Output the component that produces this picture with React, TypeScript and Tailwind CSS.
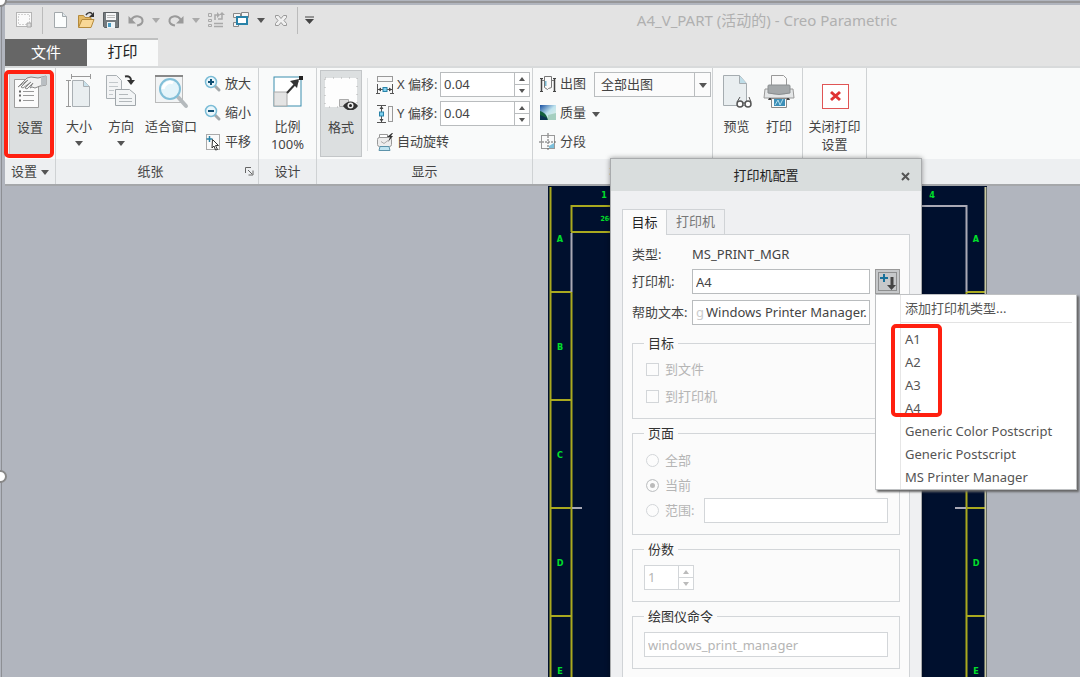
import type { ReactNode } from 'react';

const PRINTERS = [
  'A1',
  'A2',
  'A3',
  'A4',
  'Generic Color Postscript',
  'Generic Postscript',
  'MS Printer Manager',
];

const LEFT_ZONES = [
  { name: 'A', y: 55 },
  { name: 'B', y: 163 },
  { name: 'C', y: 271 },
  { name: 'D', y: 379 },
  { name: 'E', y: 487 },
];

// the open menu lies over B and C on this side
const RIGHT_ZONES = LEFT_ZONES.filter(({ name }) => name !== 'B' && name !== 'C');

interface ChildrenProps {
  children?: ReactNode;
}

/* ---------- small icons ---------- */

const Caret = ({ className = 'text-[#555]' }: { className?: string }) => (
  <svg width="8" height="6" viewBox="0 0 8 6" className={className}>
    <path d="M0 1h8L4 6z" fill="currentColor" />
  </svg>
);

const SelectIcon = () => (
  <svg width="18" height="18" viewBox="0 0 18 18">
    <rect x="1.500" y="1.500" width="15" height="14" fill="#fafafa" stroke="#b5b5b5" />
    <rect x="3.500" y="3.500" width="11" height="10" fill="none" stroke="#aaa" strokeDasharray="1 2" />
    <path d="M12 12h4v4h-4z" fill="#ddd" stroke="#aaa" />
  </svg>
);

const NewIcon = () => (
  <svg width="18" height="18" viewBox="0 0 18 18">
    <path d="M2.500 1.500h8l4 4v11h-12z" fill="#fbfdfd" stroke="#a3a9ac" />
    <path d="M10.500 1.500v4h4" fill="#dfe8ec" stroke="#a3a9ac" />
  </svg>
);

const OpenIcon = () => (
  <svg width="18" height="18" viewBox="0 0 18 18">
    <path d="M1.500 16V4.500h5l1.500 2h6V9" fill="#e3b964" stroke="#b58a3b" />
    <path d="M1.500 16.500L5 8.500h12l-3 8z" fill="#f9d896" stroke="#b58a3b" />
    <path d="M9 4c2-3 5-3 6-1" fill="none" stroke="#333" strokeWidth="1.500" />
    <path d="M17 1v5h-5z" fill="#333" />
  </svg>
);

const SaveIcon = () => (
  <svg width="18" height="18" viewBox="0 0 18 18">
    <path d="M1.500 1.500h15v15h-14l-1-1z" fill="#747a7e" stroke="#5a5f62" />
    <rect x="4" y="2" width="10" height="7" fill="#f5f6f7" />
    <path d="M5 4.500h8M5 6.500h8" stroke="#bbb" />
    <rect x="5" y="11" width="8" height="6" fill="#eef4f7" />
    <rect x="6" y="12" width="3" height="4" fill="#4a9ac0" />
  </svg>
);

const UndoIcon = ({ flip }: { flip?: boolean }) => (
  <svg width="18" height="18" viewBox="0 0 18 18" className={flip ? '-scale-x-100' : ''}>
    <path d="M4 9c4-6 12-4 11.500 1.500C15 13 13 14 10 14.500" fill="none" stroke="#9a9a9a" strokeWidth="2" />
    <path d="M1.500 5v7.500H9z" fill="#9a9a9a" />
  </svg>
);

const RegenIcon = () => (
  <svg width="18" height="18" viewBox="0 0 18 18" fill="none" stroke="#a9a9a9">
    <path d="M1.500 2.500h3v3h-3zM1.500 8.500h3v2h-3zM1.500 13.500h3v2h-3z" />
    <path d="M7 12.500h9M7 15.500h9" strokeWidth="1.500" />
    <path d="M8 9V4h3M15 3v5h-4" strokeWidth="1.500" />
    <path d="M10 1l3 3-3 3zM12 4l3-3 3 3z" fill="#a9a9a9" stroke="none" />
  </svg>
);

const WindowsIcon = () => (
  <svg width="18" height="18" viewBox="0 0 18 18">
    <path d="M1.500 2.500h7v4h-7zM1.500 11.500h5v4h-5z" fill="#f4f4f4" stroke="#888" />
    <path d="M9.500 1.500h7v5h-7z" fill="#f4f4f4" stroke="#888" />
    <rect x="5" y="6" width="10" height="7" fill="#fff" stroke="#2882a8" strokeWidth="2" />
  </svg>
);

const CloseWinIcon = () => (
  <svg width="18" height="18" viewBox="0 0 18 18">
    <path
      d="M3.500 4.500h3l2.500 3 2.500-3h3v2l-2.500 3 2.500 3v2h-3l-2.500-3-2.500 3h-3v-2l2.500-3-2.500-3z"
      fill="#f0f0f0"
      stroke="#999"
    />
  </svg>
);

const ZoomIcon = ({ minus }: { minus?: boolean }) => (
  <svg width="18" height="18" viewBox="0 0 18 18">
    <path d="M11 11l4 4" stroke="#a3a9ac" strokeWidth="3" strokeLinecap="round" />
    <circle cx="7" cy="7" r="5.500" fill="#eaf6fb" stroke="#7bbcd6" strokeWidth="1.500" />
    <path d={minus ? 'M4 7h6' : 'M4 7h6M7 4v6'} stroke="#0f4f74" strokeWidth="2" />
  </svg>
);

const PanIcon = () => (
  <svg width="18" height="18" viewBox="0 0 18 18">
    <rect x="2.500" y="1.500" width="13" height="15" fill="#fafafa" stroke="#aaa" />
    <path d="M5.500 3v6M2.500 6h6" stroke="#2882a8" strokeWidth="1.500" />
    <path d="M8.500 6.500l6 6h-3l2 4-2 .5-1.500-4-2 2z" fill="#fff" stroke="#333" />
  </svg>
);

const OffsetXIcon = () => (
  <svg width="18" height="20" viewBox="0 0 18 20">
    <rect x="1.500" y="1.500" width="15" height="5" fill="#f8f8f8" stroke="#999" />
    <path d="M1.500 9v9M16.500 9v9M0 18.500h4M14 18.500h4M2 14.500h14" stroke="#555" fill="none" />
    <path d="M2 14.500l3-2v4zM16 14.500l-3-2v4z" fill="#444" />
    <rect x="7" y="12.500" width="4" height="4" fill="#7fd0ee" stroke="#2882a8" />
  </svg>
);

const OffsetYIcon = () => (
  <svg width="18" height="20" viewBox="0 0 18 20">
    <rect x="12.500" y="2.500" width="4" height="15" fill="#f8f8f8" stroke="#999" />
    <path d="M1 1.500h9M1 18.500h9M5.500 2v16" stroke="#555" fill="none" />
    <path d="M5.500 2l-2 3h4zM5.500 18l-2-3h4z" fill="#444" />
    <rect x="3.500" y="8" width="4" height="4" fill="#7fd0ee" stroke="#2882a8" />
  </svg>
);

const AutoRotateIcon = () => (
  <svg width="18" height="20" viewBox="0 0 18 20">
    <path d="M3.500 6V2.500h8V6" fill="#fff" stroke="#999" />
    <rect x="1.500" y="5.500" width="14" height="9" rx="2" fill="#ededed" stroke="#999" />
    <path d="M5 9.500l3 2 4-3" fill="none" stroke="#aaa" />
    <path d="M4 14.500h9l1 4H3z" fill="#bfe4f1" stroke="#5d93aa" />
    <path d="M16 1l-5 4h3l-2 5 5-6h-2l2-3z" fill="#333" />
  </svg>
);

const PlotIcon = () => (
  <svg width="18" height="18" viewBox="0 0 18 18">
    <path d="M2.500 3v13M15.500 3v13" stroke="#444" strokeWidth="1.500" />
    <path d="M1 3.500h3M14 3.500h3M1 16.500h3M14 16.500h3" stroke="#444" />
    <path d="M5.500 1.500h7v11l-3 1-1 1-3-2z" fill="#fafafa" stroke="#777" />
    <path d="M6 6h1.500v5H6" fill="#79b9d3" />
    <path d="M3 5.500h3M12 5.500h3" stroke="#777" />
  </svg>
);

const QualityIcon = () => (
  <svg width="18" height="16" viewBox="0 0 18 16">
    <defs>
      <linearGradient id="sky" x1="0" y1="0" x2="1" y2="1">
        <stop offset="0" stopColor="#164ea0" />
        <stop offset="0.500" stopColor="#bfe3ee" />
        <stop offset="1" stopColor="#e9f3e4" />
      </linearGradient>
    </defs>
    <rect x="1" width="16" height="15" fill="url(#sky)" />
    <path d="M1 6c4 1 7 4 8 9H1z" fill="#14603f" />
    <path d="M1 10l7 3v2H1z" fill="#0c3554" />
    <path d="M9 10l8-2v7H9z" fill="#a5cfc0" />
  </svg>
);

const SegmentIcon = () => (
  <svg width="18" height="18" viewBox="0 0 18 18">
    <rect x="2.500" y="2.500" width="13" height="13" fill="#fafafa" stroke="#999" />
    <path d="M9 0v18M0 9h18" stroke="#666" strokeDasharray="2 1" />
    <path d="M10 13l5-3v5h-5z" fill="#7cc0dc" />
  </svg>
);

/* ---------- large ribbon icons ---------- */

const SetupIcon = () => (
  <svg width="36" height="36" viewBox="0 0 36 36">
    <path d="M2.500 5.500h24v28h-24z" fill="#fbfbfb" stroke="#9d9d9d" />
    <path d="M7 17.500h2M7 21.500h2M7 26.500h2" stroke="#666" strokeWidth="2" />
    <path d="M11 17.500h11M11 21.500h11M11 26.500h11" stroke="#999" />
    <path
      d="M6 13L15 4l4-1 7 1 8-2v9l-6 1-5 2-3-1-2 1 3-5-6 6-2-1 6-6-8 6-2-1 7-7z"
      fill="#f1f1f1"
      stroke="#888"
      strokeLinejoin="round"
    />
    <path d="M29 3l5-1v9l-5 1z" fill="#b9bec2" />
  </svg>
);

const SizeIcon = () => (
  <svg width="36" height="36" viewBox="0 0 36 36">
    <path d="M11 3.500h18M10.500 1v5M29.500 1v5M7.500 7v26M5 7.500h5M5 33.500h5" stroke="#999" fill="none" />
    <path d="M11.500 7.500h11l6 6v20h-17z" fill="#e9eef0" stroke="#a9afb3" />
    <path d="M22.500 7.500v6h6" fill="#c9e2ec" stroke="#a9afb3" />
  </svg>
);

const OrientIcon = () => (
  <svg width="36" height="36" viewBox="0 0 36 36">
    <path d="M3.500 2.500h10l5 5v18h-15z" fill="#f3f4f5" stroke="#a9afb3" />
    <path d="M6 9.500h9M6 13.500h9M6 17.500h5M6 21.500h4" stroke="#c3c8cb" />
    <path d="M12.500 16.500h14l6 5v11h-20z" fill="#f3f5f6" stroke="#a0a6aa" />
    <path d="M16 21.500h9M16 25.500h13M16 28.500h13" stroke="#b3b8bb" />
    <path d="M22 3.500c4-1 6 1 6 4" fill="none" stroke="#333" strokeWidth="2" />
    <path d="M24 7h8l-4 5z" fill="#333" />
  </svg>
);

const FitIcon = () => (
  <svg width="36" height="36" viewBox="0 0 36 36">
    <rect x="2.500" y="3.500" width="27" height="26" fill="#f2f4f5" stroke="#bbb" />
    <path d="M2 3h28" stroke="#888" strokeWidth="2" />
    <path d="M25 24l8 9" stroke="#b5babd" strokeWidth="4" strokeLinecap="round" />
    <circle cx="17" cy="16" r="10" fill="#e4f4fa" stroke="#82bfd8" strokeWidth="2" />
    <path d="M10 16c1-5 6-8 10-6" stroke="#fff" strokeWidth="3" fill="none" />
  </svg>
);

const ScaleIcon = () => (
  <svg width="32" height="36" viewBox="0 0 32 36">
    <rect x="2" y="4" width="27" height="29" fill="#fff" stroke="#3b8dad" />
    <rect x="2" y="19" width="13" height="14" fill="#e4e4e4" stroke="#aaa" />
    <path d="M15 20L26 8" stroke="#333" strokeWidth="2" />
    <path d="M18 8l9-2-2 9z" fill="#333" />
    <path d="M27 3h4v4h-4z" fill="#222" />
  </svg>
);

const FormatIcon = () => (
  <svg width="36" height="36" viewBox="0 0 36 36">
    <rect x="2" y="4" width="32" height="29" fill="#fdfdfd" stroke="#b0b0b0" strokeDasharray="1 7" />
    <path d="M16.500 25.500h9v7h-9z" fill="#ddd" stroke="#aaa" />
    <path d="M20 32c4-6 11-6 15 0-4 6-11 6-15 0z" fill="#333" />
    <circle cx="27.500" cy="31.500" r="3" fill="#eee" />
    <circle cx="27.500" cy="31.500" r="1.500" fill="#222" />
  </svg>
);

const PreviewIcon = () => (
  <svg width="36" height="36" viewBox="0 0 36 36">
    <path d="M4.500 2.500h16l7 8v22h-23z" fill="#e9eef0" stroke="#a5acb0" />
    <path d="M20.500 2.500v8h7" fill="#bfdde8" stroke="#a5acb0" />
    <circle cx="21" cy="31" r="3" fill="#fff" stroke="#555" strokeWidth="1.500" />
    <circle cx="29" cy="31" r="3" fill="#fff" stroke="#555" strokeWidth="1.500" />
    <path d="M18 29l3-5M32 29l-2-5M24 30h2" stroke="#555" />
  </svg>
);

const PrintIcon = () => (
  <svg width="36" height="36" viewBox="0 0 36 36">
    <path d="M10.500 2.500h12l3 3v9h-15z" fill="#f9f9f9" stroke="#999" />
    <path d="M4 16h28l1 9H3z" fill="#e4e6e7" stroke="#999" />
    <path d="M7 13q0-1 1-1h20q1 0 1 1v7q-11 3-22 0z" fill="#a4a8aa" stroke="#8a8e90" />
    <path d="M8 25h20l1 2H7z" fill="#444" />
    <path d="M10.500 25.500h15v9h-15z" fill="#fafafa" stroke="#888" />
    <path d="M13 26h11v7H13z" fill="#3c8fb8" />
    <path d="M14 32l3-5 2 5 3-6" stroke="#b5deec" fill="none" />
  </svg>
);

const ClosePrintIcon = () => (
  <svg width="36" height="36" viewBox="0 0 36 36">
    <rect x="5.500" y="11.500" width="26" height="24" fill="#fff" stroke="#e05555" />
    <path d="M14 19l9 8M23 19l-9 8" stroke="#e03333" strokeWidth="3" />
  </svg>
);

/* ---------- ribbon pieces ---------- */

interface GroupProps extends ChildrenProps {
  width: string;
  label?: ReactNode;
}

const Group = ({ width, label, children }: GroupProps) => (
  <section className={`${width} shrink-0 flex flex-col border-r border-[#cfd2d4]`}>
    <div className="flex h-[91px] pt-[2px]">{children}</div>
    <div className="flex h-[25px] items-center justify-center gap-1 bg-[#edeff1]">{label}</div>
  </section>
);

interface BigButtonProps extends ChildrenProps {
  width: string;
  icon: ReactNode;
  arrow?: boolean;
  active?: boolean;
}

const BigButton = ({ width, icon, arrow, active, children }: BigButtonProps) => (
  <button
    className={`${width} h-[87px] shrink-0 flex flex-col items-center pt-[3px] leading-[18px] ${
      active ? 'bg-[#dcdfe0] border border-[#c3c6c8]' : ''
    }`}
  >
    {icon}
    <span className="mt-2 whitespace-nowrap">{children}</span>
    {arrow && <Caret className="mt-[5px] shrink-0 text-[#555]" />}
  </button>
);

const SmallButton = ({ icon, children }: ChildrenProps & { icon: ReactNode }) => (
  <button className="flex h-[29px] items-center gap-[3px] whitespace-nowrap pb-px">
    {icon}
    {children}
  </button>
);

const SpinButtons = ({ width, color }: { width: string; color: string }) => (
  <span className={`${width} ${color} flex flex-col border-l border-inherit`}>
    <button aria-label="增加" className="flex flex-1 items-center justify-center border-b border-inherit">
      <svg width="6" height="4" viewBox="0 0 6 4">
        <path d="M0 4h6L3 0z" fill="currentColor" />
      </svg>
    </button>
    <button aria-label="减少" className="flex flex-1 items-center justify-center">
      <svg width="6" height="4" viewBox="0 0 6 4">
        <path d="M0 0h6L3 4z" fill="currentColor" />
      </svg>
    </button>
  </span>
);

const OffsetField = ({ icon, label }: { icon: ReactNode; label: string }) => (
  <label className="flex h-[29px] items-center gap-[3px] whitespace-nowrap">
    {icon}
    <span className="w-[40px]">{label}</span>
    <span className="flex h-[25px] border border-[#b9bcbe] bg-white">
      <input defaultValue="0.04" className="w-[73px] pl-[3px] outline-none" />
      <SpinButtons width="w-[15px]" color="text-[#555]" />
    </span>
  </label>
);

const QuickBar = () => (
  <div className="flex h-[34px] items-center pb-1">
    <div className="flex items-center gap-[7px] pl-[10px]">
      <button aria-label="选择"><SelectIcon /></button>
      <span className="mx-[2px] h-[27px] w-px bg-[#bbb]" />
      <button aria-label="新建"><NewIcon /></button>
      <button aria-label="打开"><OpenIcon /></button>
      <button aria-label="保存"><SaveIcon /></button>
      <button aria-label="撤消"><UndoIcon /></button>
      <button aria-label="撤消列表"><Caret className="text-[#aaa]" /></button>
      <button aria-label="重做"><UndoIcon flip /></button>
      <button aria-label="重做列表"><Caret className="text-[#aaa]" /></button>
      <button aria-label="重新生成"><RegenIcon /></button>
      <button aria-label="窗口"><WindowsIcon /></button>
      <button aria-label="窗口列表"><Caret /></button>
      <button aria-label="关闭窗口"><CloseWinIcon /></button>
      <span className="h-[27px] w-px bg-[#bbb]" />
      <button aria-label="自定义">
        <svg width="9" height="9" viewBox="0 0 9 9">
          <path d="M0 1h9" stroke="#444" />
          <path d="M0 3h9L4.500 8z" fill="#444" />
        </svg>
      </button>
    </div>
    <h1 className="flex-1 pl-[140px] text-center text-[15px] text-[#b0b0b0]">
      A4_V_PART (活动的) - Creo Parametric
    </h1>
  </div>
);

const Ribbon = () => (
  <div className="flex h-[120px] border-t-2 border-b-2 border-t-[#d8dadb] border-b-[#a5a7aa] bg-[#f9fafa] text-[13px] text-[#444]">
    <Group
      width="w-[51px]"
      label={
        <>
          设置 <Caret />
        </>
      }
    >
      <div className="ml-1">
        <BigButton width="w-[42px]" icon={<SetupIcon />} active>
          设置
        </BigButton>
      </div>
    </Group>
    <Group
      width="w-[203px]"
      label={
        <>
          <span className="flex-1 pl-1 text-center">纸张</span>
          <button aria-label="纸张选项" className="pr-1">
            <svg width="9" height="9" viewBox="0 0 9 9" fill="none" stroke="#666">
              <path d="M.5 6V.5H6M3 3l4 4M8 3.500V8H3.500" />
            </svg>
          </button>
        </>
      }
    >
      <BigButton width="w-[46px]" icon={<SizeIcon />} arrow>大小</BigButton>
      <BigButton width="w-[38px]" icon={<OrientIcon />} arrow>方向</BigButton>
      <BigButton width="w-[62px]" icon={<FitIcon />}>适合窗口</BigButton>
      <div className="ml-[2px]">
        <SmallButton icon={<ZoomIcon />}>放大</SmallButton>
        <SmallButton icon={<ZoomIcon minus />}>缩小</SmallButton>
        <SmallButton icon={<PanIcon />}>平移</SmallButton>
      </div>
    </Group>
    <Group width="w-[58px]" label="设计">
      <BigButton width="w-[57px]" icon={<ScaleIcon />}>
        比例
        <br />
        100%
      </BigButton>
    </Group>
    <Group width="w-[216px]" label="显示">
      <div className="ml-[3px]">
        <BigButton width="w-[42px]" icon={<FormatIcon />} active>
          格式
        </BigButton>
      </div>
      <span className="mx-[5px] my-2 w-px bg-[#dcdfe0]" />
      <div className="ml-[3px]">
        <OffsetField icon={<OffsetXIcon />} label="X 偏移:" />
        <OffsetField icon={<OffsetYIcon />} label="Y 偏移:" />
        <SmallButton icon={<AutoRotateIcon />}>自动旋转</SmallButton>
      </div>
    </Group>
    <Group width="w-[180px]" label="模型">
      <div className="ml-[6px]">
        <div className="flex items-center gap-2">
          <SmallButton icon={<PlotIcon />}>出图</SmallButton>
          <span className="relative">
            <select
              aria-label="出图范围"
              className="block h-[25px] w-[117px] appearance-none border border-[#b9bcbe] bg-[#fbfbfb] pl-[6px] outline-none"
            >
              <option>全部出图</option>
            </select>
            <span className="pointer-events-none absolute inset-y-0 right-0 flex w-[17px] items-center justify-center border-l border-[#b9bcbe]">
              <Caret />
            </span>
          </span>
        </div>
        <div className="flex items-center gap-[6px]">
          <SmallButton icon={<QualityIcon />}>质量</SmallButton>
          <Caret />
        </div>
        <SmallButton icon={<SegmentIcon />}>分段</SmallButton>
      </div>
    </Group>
    <Group width="w-[90px]">
      <BigButton width="w-[47px]" icon={<PreviewIcon />}>预览</BigButton>
      <BigButton width="w-[38px]" icon={<PrintIcon />}>打印</BigButton>
    </Group>
    <Group width="w-[64px]">
      <BigButton width="w-[63px]" icon={<ClosePrintIcon />}>
        关闭打印
        <br />
        设置
      </BigButton>
    </Group>
    <div className="flex flex-1 flex-col justify-end">
      <div className="h-[25px] bg-[#edeff1]" />
    </div>
  </div>
);

/* ---------- drawing sheet ---------- */

const Sheet = () => (
  <svg width="439" height="492" viewBox="0 -1 439 492" className="ml-[543px] block bg-[#00102e]">
    <g stroke="#a9a91f" strokeWidth="2" fill="none">
      <path d="M2.500 0v491M23.500 18v27M23.500 105v386M23 19h80M23 45h80" />
      <path d="M2 105h21M2 213h21M2 321h21M2 429h21" />
      <path d="M418.500 105v386M418 105h20M418 213h20M418 321h20M418 429h20" />
    </g>
    <path d="M437.500 0v491" stroke="#c9c8a0" strokeWidth="2" />
    <path
      d="M23.500 46v59M24 321h10M360 19h58.500v86M407 321h11"
      stroke="#a9a9b5"
      strokeWidth="2"
      fill="none"
    />
    <g fill="#00e02a" fontFamily="'DejaVu Sans Condensed', 'DejaVu Sans', sans-serif" fontWeight="bold" fontSize="9" textAnchor="middle">
      <text x="56" y="11">1</text>
      <text x="384" y="11">4</text>
      <text x="59" y="34" fontSize="7">266</text>
      {LEFT_ZONES.map(({ name, y }) => (
        <text key={name} x="12" y={y}>{name}</text>
      ))}
      {RIGHT_ZONES.map(({ name, y }) => (
        <text key={name} x="428" y={y}>{name}</text>
      ))}
    </g>
  </svg>
);

/* ---------- printer dialog ---------- */

const PrinterMenu = () => (
  <div
    role="menu"
    className="absolute top-full left-0 z-10 w-[202px] border border-[#bfc1c3] bg-white leading-[23px] text-[#555] shadow-[2px_2px_2px_#666]"
  >
    <div className="ml-6 border-l border-[#e6e6e6]">
      <button role="menuitem" className="block h-[26px] w-full pl-1 text-left">
        添加打印机类型...
      </button>
      <hr className="mt-px mr-1 mb-[5px] border-[#e3e3e3]" />
      {PRINTERS.map((name) => (
        <button key={name} role="menuitem" className="block w-full whitespace-nowrap pl-1 text-left">
          {name}
        </button>
      ))}
    </div>
    <div className="pointer-events-none absolute top-[29px] left-[15px] h-[93px] w-[51px] rounded-[5px] border-4 border-[#ff2010]" />
  </div>
);

const Box = ({ title, children }: ChildrenProps & { title: string }) => (
  <fieldset className="mb-1 border border-[#d3d6d9] px-[11px] pb-[11px]">
    <legend className="px-1 leading-5 text-[#333]">{title}</legend>
    {children}
  </fieldset>
);

const Check = ({ children }: ChildrenProps) => (
  <label className="flex h-[27px] items-center gap-[6px] pl-[2px]">
    <input type="checkbox" disabled className="size-[13px] appearance-none border border-[#d3d6d9] bg-[#fcfcfc]" />
    {children}
  </label>
);

const Radio = ({ checked, children }: ChildrenProps & { checked?: boolean }) => (
  <label className="flex h-[25px] items-center gap-[6px] pl-[2px]">
    <input
      type="radio"
      name="pages"
      disabled
      defaultChecked={checked}
      className="size-[13px] appearance-none rounded-full border border-[#d3d6d9] bg-[#fcfcfc] checked:border-[#c4c7c9] checked:bg-[#bbb] checked:shadow-[inset_0_0_0_3px_#fcfcfc]"
    />
    {children}
  </label>
);

const PrinterDialog = () => (
  <div
    role="dialog"
    aria-label="打印机配置"
    className="absolute top-[158px] left-[610px] h-[560px] w-[312px] border border-[#a9abad] bg-[#eff0f2] text-[13px] text-[#444] shadow-[0_0_5px_#0006]"
  >
    <div className="flex h-[32px] items-center bg-[#d9dddd] pt-[2px]">
      <h2 className="flex-1 pl-[20px] text-center text-[#222]">打印机配置</h2>
      <button aria-label="关闭" className="pr-[11px]">
        <svg width="9" height="9" viewBox="0 0 9 9">
          <path d="M1 1l7 7M8 1L1 8" stroke="#555" strokeWidth="2" />
        </svg>
      </button>
    </div>
    <div className="px-[11px] pt-[18px]">
      <div className="flex" role="tablist">
        <button
          role="tab"
          aria-selected
          className="relative z-[1] -mb-px h-[26px] w-[45px] border border-b-0 border-[#d0d3d6] bg-[#fbfbfb] text-[#222]"
        >
          目标
        </button>
        <button role="tab" className="h-[25px] w-[58px] border border-b-0 border-l-0 border-[#d0d3d6] text-[#777]">
          打印机
        </button>
      </div>
      <div className="h-[480px] border border-[#d0d3d6] bg-[#fbfbfb] px-[9px] pt-[7px]">
        <div className="flex h-[26px] items-center">
          <span className="w-[60px]">类型:</span>
          <span>MS_PRINT_MGR</span>
        </div>
        <div className="flex h-[27px] items-center">
          <label htmlFor="printer" className="w-[60px]">
            打印机:
          </label>
          <input
            id="printer"
            defaultValue="A4"
            className="h-[25px] w-[178px] border border-[#b9bcbe] bg-white pl-[3px] outline-none"
          />
          <div className="relative ml-[5px]">
            <button
              aria-label="选择打印机"
              className="flex size-[25px] items-center justify-center border border-[#999] bg-[#c6c8ca]"
            >
              <svg width="21" height="21" viewBox="0 0 21 21">
                <rect x="1.500" y="1.500" width="18" height="18" fill="none" stroke="#555" strokeDasharray="1 1" />
                <path d="M3 7h8M7 3v8" stroke="#17709a" strokeWidth="2" />
                <path d="M15 6v9" stroke="#444" strokeWidth="3" />
                <path d="M10 14h9l-4.500 5z" fill="#444" />
              </svg>
            </button>
            <PrinterMenu />
          </div>
        </div>
        <div className="mt-1 flex h-[27px] items-center">
          <label htmlFor="help" className="w-[60px] whitespace-nowrap">
            帮助文本:
          </label>
          <div className="flex h-[25px] w-[178px] items-center border border-[#b9bcbe] bg-white pl-[3px]">
            <span className="w-[10px] shrink-0 text-[#ccc]">g</span>
            <input
              id="help"
              readOnly
              defaultValue="Windows Printer Manager."
              className="min-w-0 flex-1 outline-none"
            />
          </div>
        </div>
        <div className="mt-[7px] text-[#b5b5b5]">
          <Box title="目标">
            <div className="-mb-[3px] pt-[3px]">
              <Check>到文件</Check>
              <Check>到打印机</Check>
            </div>
          </Box>
          <Box title="页面">
            <div className="pt-[5px]">
              <Radio>全部</Radio>
              <Radio checked>当前</Radio>
              <div className="flex items-center gap-[10px]">
                <Radio>范围:</Radio>
                <input
                  aria-label="范围"
                  disabled
                  className="h-[25px] min-w-0 flex-1 border border-[#d3d6d9] bg-white"
                />
              </div>
            </div>
          </Box>
          <Box title="份数">
            <div className="mt-[6px] flex h-[25px] w-[50px] border border-[#d3d6d9] bg-white">
              <input aria-label="份数" disabled defaultValue="1" className="min-w-0 flex-1 pl-[3px]" />
              <SpinButtons width="w-[15px]" color="text-[#bbb]" />
            </div>
          </Box>
          <Box title="绘图仪命令">
            <input
              aria-label="绘图仪命令"
              disabled
              defaultValue="windows_print_manager"
              className="mt-[6px] h-[25px] w-full border border-[#d3d6d9] bg-white pl-[3px]"
            />
          </Box>
        </div>
      </div>
    </div>
  </div>
);

const Handle = ({ className }: { className: string }) => (
  <span className={`absolute -left-[6px] size-[13px] rounded-full border-2 border-[#888] bg-white ${className}`} />
);

const App = () => {
  return (
    <div className="relative flex h-screen flex-col overflow-hidden bg-[#b1b5be] pt-[5px] pl-[5px] font-['Noto_Sans','Noto_Sans_CJK_SC',sans-serif]">
      <div className="bg-[#e3e3e3]">
        <QuickBar />
        <div className="flex h-[27px] items-stretch text-[15px]">
          <button className="w-[82px] bg-[#666] pb-px text-white">文件</button>
          <button className="-mt-px -mb-[2px] w-[71px] border-t-2 border-[#bfc0c0] bg-[#f9fafa] pb-[6px] text-[#222]">
            打印
          </button>
        </div>
      </div>
      <Ribbon />
      <main className="min-h-0 flex-1 overflow-hidden">
        <Sheet />
      </main>

      <span className="absolute inset-x-0 top-px h-[2px] bg-[#969698]" />
      <span className="absolute inset-y-0 left-px w-px bg-[#8d8f94]" />
      <Handle className="-top-[6px]" />
      <Handle className="top-[470px]" />
      <div className="absolute top-[70px] left-[4px] h-[88px] w-[50px] rounded-[5px] border-4 border-[#ff2010]" />
      <PrinterDialog />
    </div>
  );
};

export default App;
